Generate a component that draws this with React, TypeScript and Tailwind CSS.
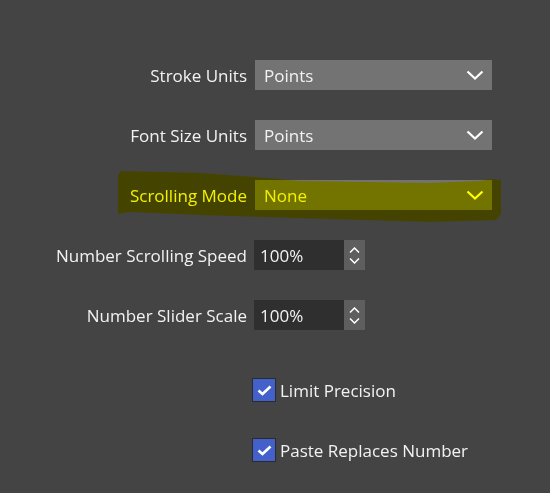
import React from 'react';

const FONT = { fontFamily: '"Open Sans", "Noto Sans", sans-serif' };

// ─── Controls ────────────────────────────────────────────────────────────────

function Chevron() {
  return (
    <svg width="18" height="10" viewBox="0 0 18 10" fill="none">
      <polyline points="1.5,1.5 9,8.5 16.5,1.5" stroke="#ffffff" strokeWidth="2.2" />
    </svg>
  );
}

function Select({ value }: { value: string }) {
  return (
    <div className="ml-[1px] flex h-[30px] w-[237px] items-center justify-between bg-[#737373] pl-[9px] pr-[8px] text-[#f2f2f2]">
      <span>{value}</span>
      <Chevron />
    </div>
  );
}

function NumberInput({ value }: { value: string }) {
  return (
    <div className="flex h-[30px]">
      <div className="flex w-[90px] items-center bg-[#2f2f2f] pl-[6px] text-[#f2f2f2]">{value}</div>
      <div className="flex w-[21px] flex-col items-center justify-center gap-[5px] bg-[#5e5e5e]">
        <svg width="11" height="6" viewBox="0 0 11 6" fill="none">
          <polyline points="1,5.5 5.5,1 10,5.5" stroke="#ffffff" strokeWidth="1.5" />
        </svg>
        <svg width="11" height="6" viewBox="0 0 11 6" fill="none">
          <polyline points="1,0.5 5.5,5 10,0.5" stroke="#ffffff" strokeWidth="1.5" />
        </svg>
      </div>
    </div>
  );
}

function Checkbox({ label }: { label: string }) {
  return (
    <div className="flex items-center pl-[252px]">
      <div className="flex h-[24px] w-[24px] items-center justify-center border border-[#2a2a2a] bg-[#4461cb]">
        <svg width="15" height="11" viewBox="0 0 15 11" fill="none">
          <polyline points="1.5,5.5 5.5,9 13.5,1.5" stroke="#ffffff" strokeWidth="2.6" />
        </svg>
      </div>
      <span className="ml-[4px] text-[#f2f2f2]">{label}</span>
    </div>
  );
}

function Row({ label, children }: { label: string; children: React.ReactNode }) {
  return (
    <div className="flex h-[30px] items-center">
      <div className="w-[248px] pr-[1px] text-right text-[#f2f2f2]">{label}</div>
      <div className="ml-[6px]">{children}</div>
    </div>
  );
}

// ─── Page ────────────────────────────────────────────────────────────────────

export default function App() {
  return (
    <div
      className="relative isolate h-[493px] w-[550px] overflow-hidden bg-[#444444] text-[17px] leading-none"
      style={FONT}
    >
      <div className="flex flex-col gap-[30px] pt-[60px]">
        <Row label="Stroke Units">
          <Select value="Points" />
        </Row>
        <Row label="Font Size Units">
          <Select value="Points" />
        </Row>
        <Row label="Scrolling Mode">
          <Select value="None" />
        </Row>
        <Row label="Number Scrolling Speed">
          <NumberInput value="100%" />
        </Row>
        <Row label="Number Slider Scale">
          <NumberInput value="100%" />
        </Row>
      </div>

      <div className="mt-[48px] flex flex-col gap-[36px]">
        <Checkbox label="Limit Precision" />
        <Checkbox label="Paste Replaces Number" />
      </div>

      {/* marker highlight over the Scrolling Mode row */}
      <svg
        className="pointer-events-none absolute inset-0 mix-blend-multiply"
        width="550"
        height="493"
        viewBox="0 0 550 493"
      >
        <polygon
          points="118,175 121,171 200,173 255,177 300,181 430,183 480,181 492,179 501,180 501,214 496,220 430,222 330,219 200,215 130,212 118,214"
          fill="#ffff00"
        />
      </svg>
    </div>
  );
}
